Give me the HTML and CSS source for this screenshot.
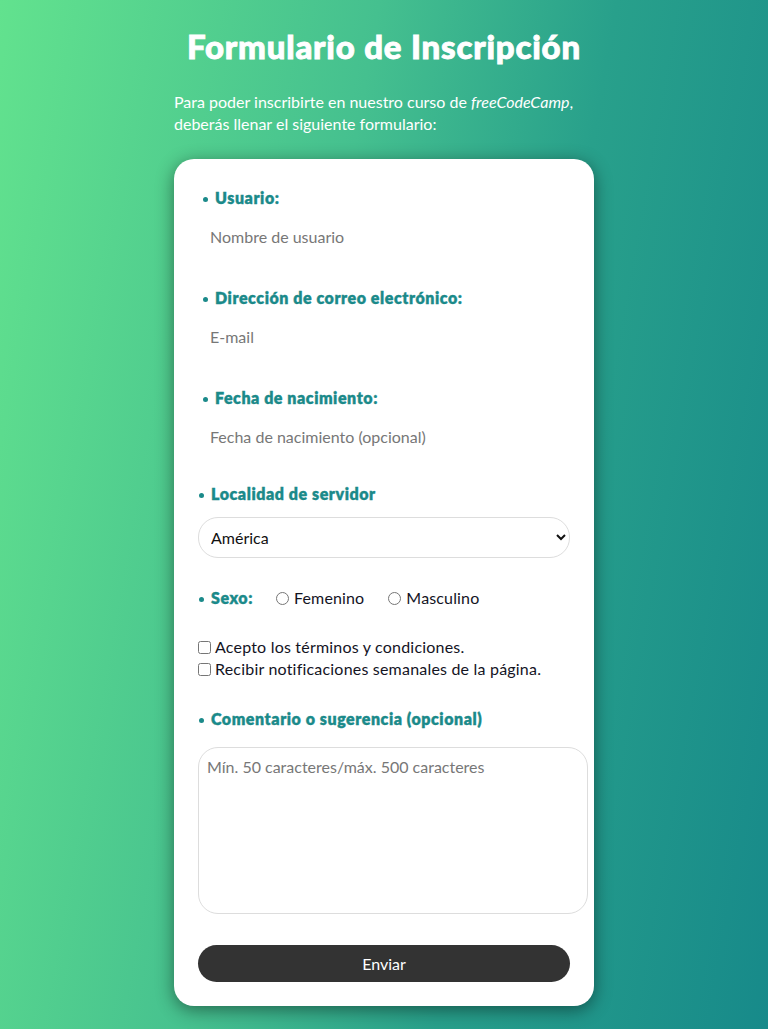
FILE: index.html
```html
<!DOCTYPE html>
<html lang="es">
<head>
<meta charset="utf-8">
<title>Formulario de Inscripción</title>
<link rel="stylesheet" href="styles.css">
</head>
<body>
<main class="wrap">
  <h1 class="title">Formulario de Inscripción</h1>
  <p class="intro">Para poder inscribirte en nuestro curso de <em>freeCodeCamp</em>, deberás llenar el siguiente formulario:</p>
  <form class="card">
    <div class="field indent">
      <label class="label" for="user">Usuario:</label>
      <input class="text-input" id="user" type="text" placeholder="Nombre de usuario">
    </div>
    <div class="field indent">
      <label class="label" for="mail">Dirección de correo electrónico:</label>
      <input class="text-input" id="mail" type="email" placeholder="E-mail">
    </div>
    <div class="field indent">
      <label class="label" for="birth">Fecha de nacimiento:</label>
      <input class="text-input" id="birth" type="text" placeholder="Fecha de nacimiento (opcional)">
    </div>
    <div class="field select-field">
      <label class="label" for="loc">Localidad de servidor</label>
      <select class="select" id="loc">
        <option>América</option>
        <option>Europa</option>
        <option>Asia</option>
      </select>
    </div>
    <div class="sex-row">
      <span class="label">Sexo:</span>
      <label class="radio"><input type="radio" name="sex"> Femenino</label>
      <label class="radio"><input type="radio" name="sex"> Masculino</label>
    </div>
    <div class="checks">
      <label class="check"><input type="checkbox"> Acepto los términos y condiciones.</label>
      <label class="check"><input type="checkbox"> Recibir notificaciones semanales de la página.</label>
    </div>
    <div class="field comment-field">
      <label class="label" for="comment">Comentario o sugerencia (opcional)</label>
      <textarea class="textarea" id="comment" placeholder="Mín. 50 caracteres/máx. 500 caracteres"></textarea>
    </div>
    <button class="submit" type="submit">Enviar</button>
  </form>
</main>
</body>
</html>
```
FILE: styles.css
```css
html, body {
  margin: 0;
  padding: 0;
}
body {
  min-height: 1029px;
  background: linear-gradient(100deg, #62e28e 0%, #45c08f 40%, #28a08b 65%, #178a8a 100%);
  font-family: "Lato", "Noto Sans", sans-serif;
  color: #14141f;
  font-size: 16px;
}
.wrap {
  width: 420px;
  margin: 0 auto;
  padding-top: 26px;
  padding-bottom: 23px;
}
.title {
  margin: 0;
  font-size: 33px;
  line-height: 40px;
  font-weight: 900;
  letter-spacing: 0.8px;
  color: #fff;
  -webkit-text-stroke: 0.9px #fff;
  text-align: center;
}
.intro {
  margin: 25px 0 24px;
  color: #fff;
  font-size: 16px;
  line-height: 22px;
}
.card {
  background: #fff;
  border-radius: 20px;
  padding: 28px 24px 24px;
  box-shadow: 0 4px 18px rgba(0, 0, 0, 0.45);
  display: flex;
  flex-direction: column;
}
.field {
  display: flex;
  flex-direction: column;
}
.label {
  color: #1b8a8a;
  font-weight: 800;
  font-size: 16px;
  line-height: 22px;
  letter-spacing: 0.55px;
  -webkit-text-stroke: 0.35px #1b8a8a;
  display: flex;
  align-items: center;
}
.label::before {
  content: "";
  width: 5px;
  height: 5px;
  border-radius: 50%;
  background: #1b8a8a;
  margin: 2px 7px 0 1px;
  flex: none;
}
.indent .label {
  padding-left: 4px;
}
.text-input {
  margin: 7px 0 31px;
  height: 40px;
  border: none;
  outline: none;
  padding: 0 12px;
  font-family: inherit;
  font-size: 16px;
  color: #111;
  background: transparent;
}
.text-input::placeholder {
  color: #777;
}
.field.indent:nth-child(3) .text-input {
  margin-bottom: 27px;
}
.select {
  margin-top: 12px;
  height: 41px;
  border: 1px solid #ddd;
  border-radius: 20px;
  padding: 0 8px;
  font-family: inherit;
  font-size: 16px;
  color: #111;
  background: #fff;
}
.sex-row {
  margin-top: 29px;
  display: flex;
  align-items: center;
  line-height: 22px;
}
.sex-row .label {
  margin-right: 19px;
}
.radio {
  display: inline-flex;
  align-items: center;
  margin-right: 20px;
  letter-spacing: 0.15px;
}
.radio input {
  margin: 0 5px 0 4px;
  width: 13px;
  height: 13px;
}
.checks {
  margin-top: 27px;
  display: flex;
  flex-direction: column;
  line-height: 22px;
}
.check {
  display: flex;
  align-items: center;
  letter-spacing: 0.2px;
}
.check input {
  margin: 0 4px 0 0;
  width: 13px;
  height: 13px;
}
.comment-field {
  margin-top: 28px;
}
.textarea {
  margin-top: 17px;
  width: 390px;
  height: 167px;
  box-sizing: border-box;
  border: 1px solid #ddd;
  border-radius: 20px;
  padding: 8px 8px;
  font-family: inherit;
  font-size: 16px;
  line-height: 22px;
  resize: none;
  outline: none;
}
.textarea::placeholder {
  color: #777;
}
.submit {
  margin-top: 31px;
  height: 37px;
  border: none;
  border-radius: 20px;
  background: #333;
  color: #fff;
  font-family: inherit;
  font-size: 16px;
}
```
